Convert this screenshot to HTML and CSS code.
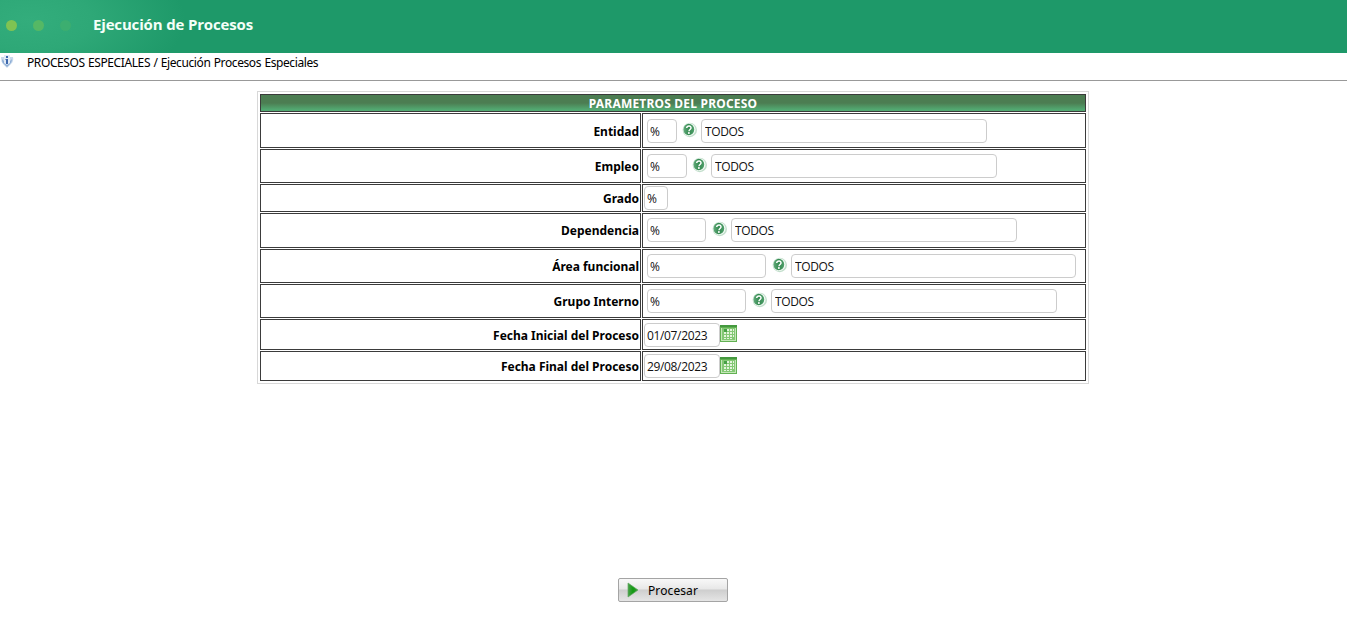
FILE: index.html
```html
<!DOCTYPE html>
<html lang="es">
<head>
<meta charset="utf-8">
<title>Ejecución de Procesos</title>
<link rel="stylesheet" href="styles.css">
</head>
<body>
<svg class="defs" width="0" height="0" aria-hidden="true">
  <defs>
    <linearGradient id="ball" x1="0" x2="1"><stop offset="0" stop-color="#63ab7b"/><stop offset=".5" stop-color="#358a51"/><stop offset="1" stop-color="#4f9f6a"/></linearGradient>
    <linearGradient id="play" x1="0" x2="1"><stop offset="0" stop-color="#4aa04a"/><stop offset=".5" stop-color="#109a10"/><stop offset="1" stop-color="#3c9a3c"/></linearGradient>
    <symbol id="help" viewBox="0 0 15 16">
      <circle cx="7.800" cy="8" r="7.200" fill="#c3dfcc"/>
      <circle cx="7.300" cy="7.600" r="6.300" fill="#f4faf6"/>
      <ellipse cx="6.800" cy="7.500" rx="5.400" ry="5.800" fill="url(#ball)"/>
      <path d="M4.700 6c.4-2.600 4.500-2.600 4.300 0-.1 1.500-1.900 1.500-2 3.200" fill="none" stroke="#fff" stroke-width="1.500"/>
      <circle cx="6.900" cy="11" r="1" fill="#fff"/>
    </symbol>
    <symbol id="calendar" viewBox="0 0 17 17">
      <path fill="#62b153" d="M0 0h17v17H0z"/>
      <path fill="#45993f" d="M0 0h17v2H0z"/>
      <path fill="#c5e7b9" d="M1 3h15v13H1z"/>
      <path fill="#83c874" d="M2 3h13v12H2z"/>
      <path fill="#e3f4dc" d="M7 4h2v2H7zM10 4h2v2h-2zM13 4h1v2h-1zM4 7h2v2H4zM7 7h2v2H7zM10 7h2v2h-2zM13 7h1v2h-1zM4 10h2v2H4zM7 10h2v2H7zM10 10h2v2h-2zM13 10h1v2h-1zM4 13h2v1H4zM7 13h2v1H7zM10 13h2v1h-2z"/>
      <path fill="#46a044" d="M4 4h3v3H4z"/>
    </symbol>
  </defs>
</svg>
<header class="banner">
  <span class="dot dot-1"></span><span class="dot dot-2"></span><span class="dot dot-3"></span>
  <h1 class="banner-title">Ejecución de Procesos</h1>
</header>
<nav class="crumbs">
  <svg class="crumb-icon" width="14" height="14" viewBox="0 0 14 14"><path d="M0 2Q0 7 2 9l4 4 4-4q3-3 2-7z" fill="#c9d9ec"/><path d="M1 4q0 4 2 5l3 3 3-3q2-2 2-5L8 7H4z" fill="#8fafd6"/><path d="M3 0h6v8l-3 2-3-2z" fill="#e3ebf5"/><path d="M5 1h2v2H5zM4.500 4H7v5H5V5h-.5z" fill="#3d68ad"/></svg>
  <span class="crumb-text">PROCESOS ESPECIALES / Ejecución Procesos Especiales</span>
</nav>
<main class="panel">
  <div class="head">PARAMETROS DEL PROCESO</div>
  <label class="label low">Entidad</label>
  <div class="cell first"><input class="code w30" value="%"><svg class="help"><use href="#help"/></svg><input class="name" value="TODOS"></div>
  <label class="label">Empleo</label>
  <div class="cell"><input class="code w40" value="%"><svg class="help"><use href="#help"/></svg><input class="name" value="TODOS"></div>
  <label class="label">Grado</label>
  <div class="cell tight grade"><input class="code w24" value="%"></div>
  <label class="label">Dependencia</label>
  <div class="cell"><input class="code w59" value="%"><svg class="help"><use href="#help"/></svg><input class="name drop" value="TODOS"></div>
  <label class="label">Área funcional</label>
  <div class="cell"><input class="code w119" value="%"><svg class="help"><use href="#help"/></svg><input class="name short" value="TODOS"></div>
  <label class="label">Grupo Interno</label>
  <div class="cell"><input class="code drop w99" value="%"><svg class="help"><use href="#help"/></svg><input class="name drop" value="TODOS"></div>
  <label class="label low">Fecha Inicial del Proceso</label>
  <div class="cell tight date"><input class="w76" value="01/07/2023"><svg class="calendar"><use href="#calendar"/></svg></div>
  <label class="label">Fecha Final del Proceso</label>
  <div class="cell tight date last"><input class="w76 drop" value="29/08/2023"><svg class="calendar"><use href="#calendar"/></svg></div>
</main>
<footer class="actions">
  <button class="run" type="button"><svg width="12" height="16" viewBox="0 0 12 16"><path d="M1 1l10 7-10 7z" fill="url(#play)" stroke="#62a862" stroke-width=".7"/></svg><span>Procesar</span></button>
</footer>
</body>
</html>
```
FILE: styles.css
```css
* { box-sizing: border-box; }
body { margin: 0; background: #fff; color: #000; font: 12px "Noto Sans", sans-serif; overflow: hidden; }
.defs { position: absolute; }
.banner { height: 53px; display: flex; align-items: center; padding: 0 0 3px 6px; background: radial-gradient(ellipse 155px 75px at 30px 20px, #33ad7c 0%, #2ea877 40%, #1e9969 100%); }
.dot { width: 11px; height: 11px; border-radius: 50%; margin-right: 16px; }
.dot-1 { background: #7fc353; }
.dot-2 { background: #55b865; }
.dot-3 { background: #3cae70; }
.banner-title { margin: 0 0 0 6px; padding-bottom: 2px; font: bold 15px "Open Sans", sans-serif; letter-spacing: -.16px; color: #f4fff8; }
.crumbs { height: 28px; display: flex; align-items: flex-start; padding-left: 1px; border-bottom: 1px solid #999; }
.crumb-icon { margin-top: 2px; }
.crumb-text { margin-left: 12px; line-height: 19px; white-space: nowrap; letter-spacing: -.4px; word-spacing: .6px; }
.panel { width: 832px; height: 293px; margin: 10px 0 0 257px; border: 1px solid #d8d8d8; padding: 2px; display: grid; grid-template-columns: 381px 444px; grid-template-rows: 18px 35px 34px 28px 35px 34px 34px 31px 30px; gap: 1px; }
.head { grid-column: 1 / 3; border: 1px solid #3b3b3b; background: linear-gradient(#4c7d52 0%, #4c7d52 50%, #52a871 90%); display: flex; align-items: center; justify-content: center; color: #fff; font-weight: bold; line-height: 16px; padding-top: 2px; letter-spacing: .2px; }
.label { border: 1px solid #3b3b3b; display: flex; align-items: center; justify-content: flex-end; padding-right: 1px; font-weight: bold; letter-spacing: -.01px; }
.low { padding-top: 1px; }
.cell { border: 1px solid #3b3b3b; display: flex; align-items: flex-start; padding: 4px 0 0 4px; }
.first { padding-top: 5px; }
.tight { padding-left: 1px; }
.grade { padding-top: 1px; }
.date { padding-top: 3px; }
.last { padding-top: 2px; }
input { height: 24px; border: 1px solid #ccc; border-radius: 4px; background: #fff; padding: 0 3px; margin: 0; font: 12px "Open Sans", sans-serif; color: #111; letter-spacing: -.4px; flex: none; }
.code { padding-left: 2px; }
.drop { padding-top: 1px; }
.help { width: 15px; height: 16px; margin: 3px 4px 0 5px; flex: none; }
.calendar { width: 17px; height: 17px; margin-top: 2px; flex: none; }
.last .calendar { margin-top: 3px; }
.name { width: 286px; }
.short { width: 285px; }
.w24 { width: 24px; }
.w30 { width: 30px; }
.w40 { width: 40px; }
.w59 { width: 59px; margin-right: 1px; }
.w76 { width: 76px; padding-left: 2px; letter-spacing: -.35px; }
.w99 { width: 99px; margin-right: 1px; }
.w119 { width: 119px; margin-right: 1px; }
.actions { margin: 194px 0 0 618px; }
.run { width: 110px; height: 24px; border: 1px solid #a4a4a4; border-radius: 2px; background: linear-gradient(#f8f8f8 0%, #e8e8e8 45%, #cecece 50%, #e5e5e5 100%); display: flex; align-items: center; padding: 0 0 0 8px; gap: 9px; font: 12px "Noto Sans", sans-serif; letter-spacing: .1px; color: #000; }
```
